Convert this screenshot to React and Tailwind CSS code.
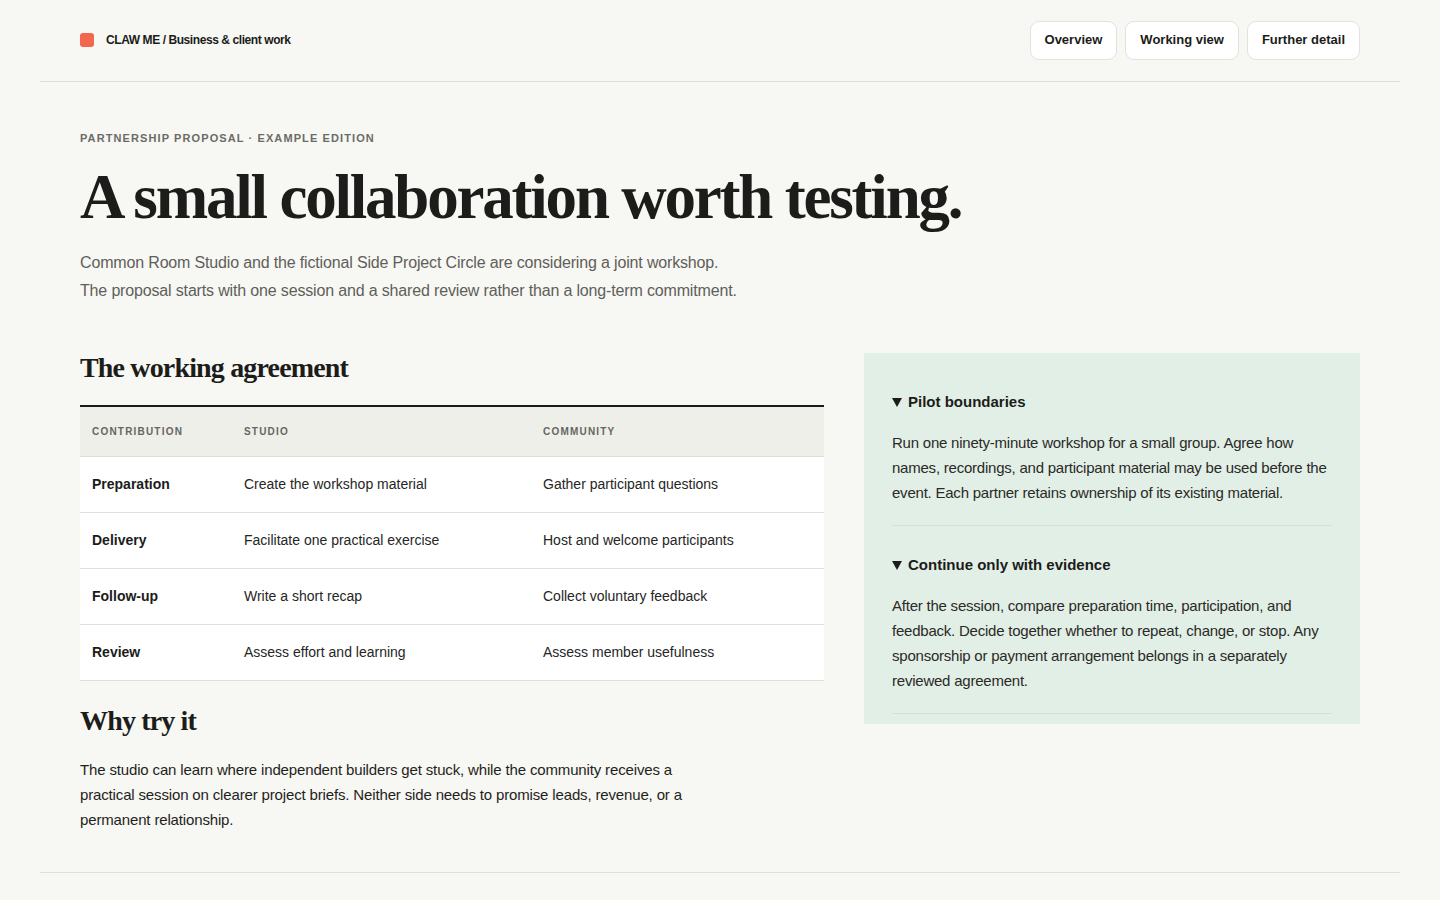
import React from "react";

const sans = { fontFamily: '"Liberation Sans", Arial, sans-serif' };
const serif = { fontFamily: '"Liberation Serif", "Times New Roman", serif' };

const rows = [
  ["Preparation", "Create the workshop material", "Gather participant questions"],
  ["Delivery", "Facilitate one practical exercise", "Host and welcome participants"],
  ["Follow-up", "Write a short recap", "Collect voluntary feedback"],
  ["Review", "Assess effort and learning", "Assess member usefulness"],
];

function Triangle() {
  return (
    <svg width="10" height="9" viewBox="0 0 10 9" className="shrink-0">
      <path d="M0 0 H10 L5 9 Z" fill="#1c1c1a" />
    </svg>
  );
}

function Detail({ title, children }) {
  return (
    <div className="pt-[29px] pb-5 border-b border-[#d3e2d8]">
      <div className="flex items-center gap-[6px] h-5 text-[15px] font-bold text-[#1c1c1a]">
        <Triangle />
        {title}
      </div>
      <p className="mt-[18px] text-[15px] leading-[25px] tracking-[-0.015em] text-[#2a2a27]">{children}</p>
    </div>
  );
}

export default function App() {
  return (
    <div className="min-h-screen bg-[#f7f7f3] text-[#1c1c1a]" style={sans}>
      <div className="max-w-[1360px] mx-auto">
        {/* top bar */}
        <header className="h-[82px] px-10 flex items-center justify-between border-b border-[#e0e0da]">
          <div className="flex items-center gap-3 -mt-[2px]">
            <span className="w-[14px] h-[14px] rounded-[3px] bg-[#f2674d]" />
            <span className="text-[12px] font-bold tracking-[-0.035em]">CLAW ME / Business &amp; client work</span>
          </div>
          <nav className="flex items-center gap-2 -mt-[1px]">
            {["Overview", "Working view", "Further detail"].map((l) => (
              <button key={l} className="h-[39px] px-[14px] rounded-[9px] border border-[#e3e3dd] bg-white text-[13px] font-bold">
                {l}
              </button>
            ))}
          </nav>
        </header>

        <main className="px-10 pt-[48px] pb-[40px]">
          <div className="text-[11px] leading-[16px] font-bold tracking-[0.1em] text-[#6b6b66]">
            PARTNERSHIP PROPOSAL · EXAMPLE EDITION
          </div>
          <h1 className="mt-[17px] text-[63px] leading-[68px] font-bold tracking-[-0.035em]" style={serif}>
            A small collaboration worth testing.
          </h1>
          <p className="mt-[18px] text-[16px] leading-[28px] tracking-[-0.01em] text-[#5f5f5a]">
            Common Room Studio and the fictional Side Project Circle are considering a joint workshop.
            <br />
            The proposal starts with one session and a shared review rather than a long-term commitment.
          </p>

          <div className="mt-[48px] grid grid-cols-[3fr_2fr] gap-10 items-start">
            <section>
              <h2 className="text-[28px] leading-[30px] font-bold tracking-[-0.03em]" style={serif}>
                The working agreement
              </h2>
              <table className="mt-[22px] w-full border-t-2 border-[#1a1a18] text-left">
                <thead className="bg-[#efefea]">
                  <tr className="h-[50px] border-b border-[#dfdfd9]">
                    <th className="w-[152px] px-3 text-[10px] font-bold tracking-[0.12em] text-[#66665f]">CONTRIBUTION</th>
                    <th className="w-[299px] px-3 text-[10px] font-bold tracking-[0.12em] text-[#66665f]">STUDIO</th>
                    <th className="px-3 text-[10px] font-bold tracking-[0.12em] text-[#66665f]">COMMUNITY</th>
                  </tr>
                </thead>
                <tbody className="bg-white">
                  {rows.map((r) => (
                    <tr key={r[0]} className="h-[56px] border-b border-[#e0e0da]">
                      <td className="px-3 text-[14px] font-bold">{r[0]}</td>
                      <td className="px-3 text-[14px] text-[#26261f]">{r[1]}</td>
                      <td className="px-3 text-[14px] text-[#26261f]">{r[2]}</td>
                    </tr>
                  ))}
                </tbody>
              </table>

              <h2 className="mt-[25px] text-[28px] leading-[30px] font-bold tracking-[-0.03em]" style={serif}>
                Why try it
              </h2>
              <p className="mt-[21px] max-w-[620px] text-[15px] leading-[25px] tracking-[-0.01em] text-[#1f1f1c]">
                The studio can learn where independent builders get stuck, while the community receives a
                practical session on clearer project briefs. Neither side needs to promise leads, revenue, or a
                permanent relationship.
              </p>
            </section>

            <aside className="bg-[#e2efe6] px-7 pt-[10px] pb-[10px]">
              <Detail title="Pilot boundaries">
                Run one ninety-minute workshop for a small group. Agree how names, recordings, and participant
                material may be used before the event. Each partner retains ownership of its existing material.
              </Detail>
              <Detail title="Continue only with evidence">
                After the session, compare preparation time, participation, and feedback. Decide together whether
                to repeat, change, or stop. Any sponsorship or payment arrangement belongs in a separately
                reviewed agreement.
              </Detail>
            </aside>
          </div>
        </main>
        <div className="border-t border-[#e0e0da] h-[40px]" />
      </div>
    </div>
  );
}
